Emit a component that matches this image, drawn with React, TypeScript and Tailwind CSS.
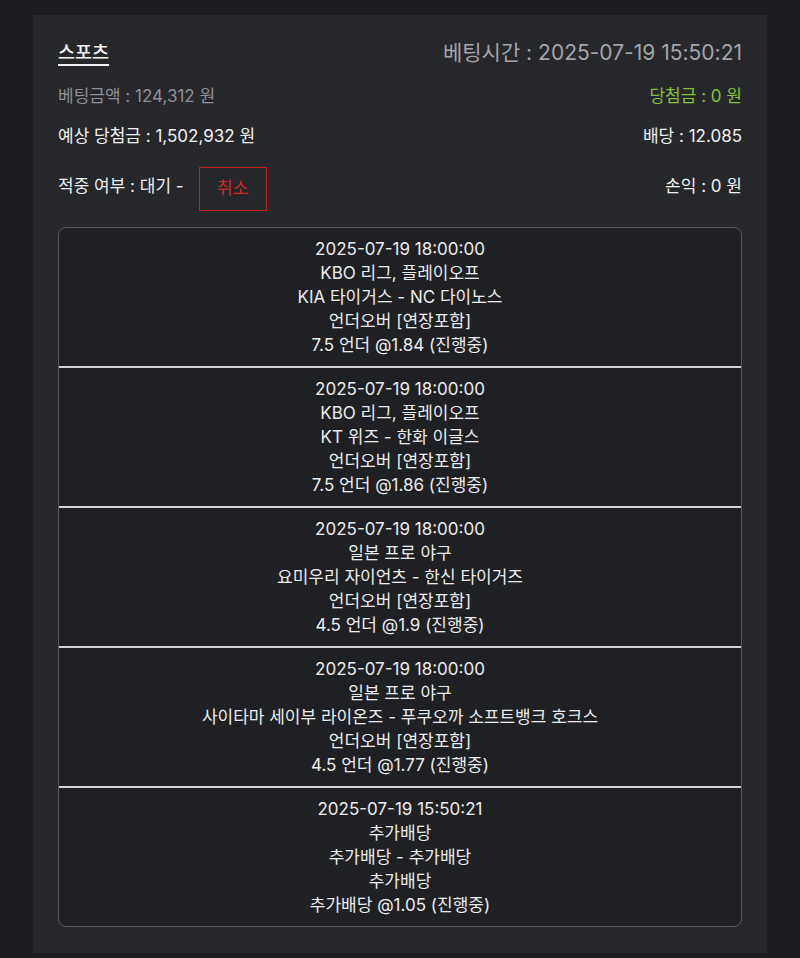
import React from "react";

const bets = [
  ["2025-07-19 18:00:00", "KBO 리그, 플레이오프", "KIA 타이거스 - NC 다이노스", "언더오버 [연장포함]", "7.5 언더 @1.84 (진행중)"],
  ["2025-07-19 18:00:00", "KBO 리그, 플레이오프", "KT 위즈 - 한화 이글스", "언더오버 [연장포함]", "7.5 언더 @1.86 (진행중)"],
  ["2025-07-19 18:00:00", "일본 프로 야구", "요미우리 자이언츠 - 한신 타이거즈", "언더오버 [연장포함]", "4.5 언더 @1.9 (진행중)"],
  ["2025-07-19 18:00:00", "일본 프로 야구", "사이타마 세이부 라이온즈 - 푸쿠오까 소프트뱅크 호크스", "언더오버 [연장포함]", "4.5 언더 @1.77 (진행중)"],
  ["2025-07-19 15:50:21", "추가배당", "추가배당 - 추가배당", "추가배당", "추가배당 @1.05 (진행중)"],
];

export default function App() {
  return (
    <div
      className="min-h-screen w-full bg-[#1b1c20] pt-[15px] pb-[5px]"
      style={{ fontFamily: '"Inter", "Noto Sans CJK KR", sans-serif' }}
    >
      <div className="mx-[33px] bg-[#26272b] px-[25px] pt-[24px] pb-[26px]">
        <div className="flex h-[28px] items-center justify-between">
          <span className="text-[18.5px] font-medium text-[#f2f2f2] underline underline-offset-[5px] decoration-[1.5px]">
            스포츠
          </span>
          <span className="text-[21px] text-[#a4a4a9]">베팅시간 : 2025-07-19 15:50:21</span>
        </div>
        <div className="mt-[18px] flex h-[24px] items-center justify-between text-[17px]">
          <span className="text-[#8e8e93]">베팅금액 : 124,312 원</span>
          <span className="text-[#84c232]">당첨금 : 0 원</span>
        </div>
        <div className="mt-[16px] flex h-[24px] items-center justify-between text-[17px] text-[#f0f0f0]">
          <span>예상 당첨금 : 1,502,932 원</span>
          <span>배당 : 12.085</span>
        </div>
        <div className="mt-[18px] flex h-[44px] items-center justify-between text-[17px] text-[#f0f0f0]">
          <div className="flex items-center gap-[15px]">
            <span className="-mt-[4px]">적중 여부 : 대기 -</span>
            <button className="flex h-[44px] w-[68px] items-center justify-center border-[1.5px] border-[#c21c1c] text-[17px] text-[#d62828]">
              취소
            </button>
          </div>
          <span className="-mt-[4px]">손익 : 0 원</span>
        </div>
        <div className="mt-[16px] overflow-hidden rounded-lg border border-[#56575c] bg-[#1f2024]">
          {bets.map((b, i) => (
            <div
              key={i}
              className={
                "flex flex-col items-center py-[9px] text-center text-[17px] leading-[24px] text-[#ececec]" +
                (i > 0 ? " border-t-2 border-[#d2d2d2]" : "")
              }
            >
              {b.map((line, j) => (
                <span key={j}>{line}</span>
              ))}
            </div>
          ))}
        </div>
      </div>
    </div>
  );
}
